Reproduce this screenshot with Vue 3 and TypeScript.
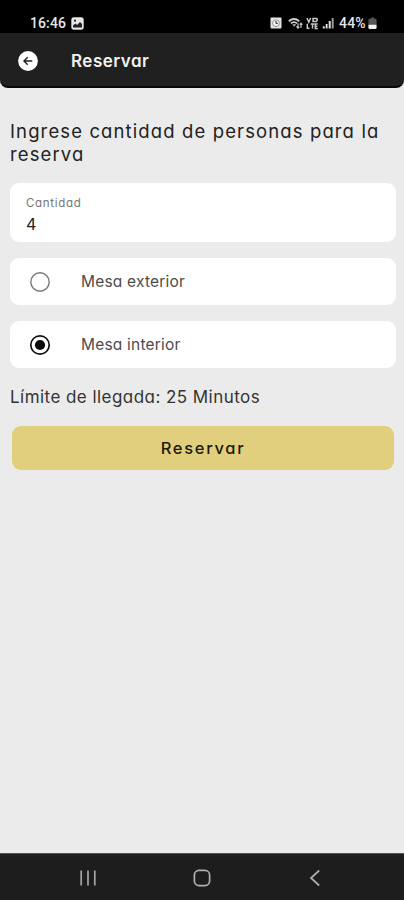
<script setup lang="ts">
import { ref } from 'vue'

interface TableOption {
  id: string
  label: string
}

const options: TableOption[] = [
  { id: 'exterior', label: 'Mesa exterior' },
  { id: 'interior', label: 'Mesa interior' },
]
const selected = ref('interior')
const quantity = ref('4')
</script>

<template>
  <div class="screen">
    <div class="status">
      <span class="clock">16:46</span>
      <svg class="photo" width="13" height="13" viewBox="0 0 13 13">
        <rect x="0.3" y="0.3" width="12.4" height="12.4" rx="2.6" fill="#e6e6e6" />
        <path d="M2 10.4V8.6L4.4 6.4l1.7 1.5L9 5l2 2v3.4z" fill="#222" />
        <circle cx="4" cy="3.7" r="1.1" fill="#222" />
      </svg>
      <div class="indicators">
        <svg width="12" height="12" viewBox="0 0 12 12">
          <rect x="0.5" y="0.5" width="11" height="11" rx="1" fill="#e4e4e4" />
          <circle cx="6" cy="6.2" r="3.4" fill="#f5f5f5" stroke="#888" stroke-width="0.9" />
          <path d="M6 4v2.4h1.8" fill="none" stroke="#222" stroke-width="1" />
        </svg>
        <svg class="wifi" width="15" height="12" viewBox="0 0 15 12">
          <path d="M0.8 4.2Q6 -0.2 11.2 4.2M2.8 6.4Q6 3.8 9.2 6.4" fill="none" stroke="#d0d0d0" stroke-width="1.8" />
          <path d="M4.2 7.2h4L6.2 9.8z" fill="#bbb" />
          <path d="M10 11V6.2M8.4 9.4l1.6 1.8 1.3-1.6M13 6.2v4.8M11.8 7.6L13 6.2l1.4 1.5" fill="none" stroke="#c4c4c4" stroke-width="1.2" />
        </svg>
        <svg class="lte" width="13" height="13" viewBox="0 0 13 13">
          <path d="M1 1l1.8 4.2L4.6 1M7 1.5h3.8q1.2 1.7-.6 3H7zM1.3 6.8v4.4h2.2M4.7 7h3.6M6.5 7v4.6M11.7 7H9.3v4.5h2.6M9.3 9.2h2" fill="none" stroke="#c8c8c8" stroke-width="1.5" />
        </svg>
        <svg class="signal" width="13" height="12" viewBox="0 0 13 12">
          <path d="M0.8 9.2h1.9v2.3H0.8zM3.7 7h1.9v4.5H3.7zM6.7 4h2v7.5h-2z" fill="#dedede" />
          <path d="M9.7 1h2v10.5h-2z" fill="#999" />
        </svg>
        <span class="percent">44%</span>
        <svg class="battery" width="9" height="13" viewBox="0 0 9 13">
          <path d="M2.8 .5h3.4v1.2h1q1.4 0 1.4 1.4V7H.4V3.1q0-1.4 1.4-1.4h1z" fill="#555" />
          <path d="M.4 7.5h8.2v3.3q0 1.3-1.4 1.3H1.8Q.4 12.1.4 10.8z" fill="#f4f4f4" />
        </svg>
      </div>
    </div>

    <header class="bar">
      <button class="back" aria-label="Volver">
        <svg width="20" height="20" viewBox="0 0 20 20">
          <circle cx="10" cy="10" r="9.9" fill="#fff" />
          <path d="M14.3 10H6.1M9.7 6.3L6 10l3.7 3.7" fill="none" stroke="#202020" stroke-width="1.4" />
        </svg>
      </button>
      <h1 class="title">Reservar</h1>
    </header>

    <main class="content">
      <p class="prompt">Ingrese cantidad de personas para la reserva</p>

      <label class="field">
        <span class="field-label">Cantidad</span>
        <input v-model="quantity" class="field-value" inputmode="numeric" />
      </label>

      <button v-for="o in options" :key="o.id" class="option" @click="selected = o.id">
        <svg class="radio" width="22" height="22" viewBox="0 0 22 22">
          <circle cx="11" cy="11" r="9.2" fill="none" :stroke="selected === o.id ? '#111' : '#777'" :stroke-width="selected === o.id ? 1.7 : 1.4" />
          <circle v-if="selected === o.id" cx="11" cy="11" r="5.1" fill="#080808" />
        </svg>
        <span class="option-label">{{ o.label }}</span>
      </button>

      <p class="limit">Límite de llegada: 25 Minutos</p>
      <button class="submit">Reservar</button>
    </main>

    <nav class="nav">
      <svg width="18" height="18" viewBox="0 0 18 18">
        <path d="M2.2 1.5v15M9 1.5v15M15.8 1.5v15" stroke="#a5a5a5" stroke-width="1.7" />
      </svg>
      <svg width="18" height="18" viewBox="0 0 18 18">
        <rect x="1.4" y="1.4" width="15.2" height="15.2" rx="4.6" fill="none" stroke="#b0b0b0" stroke-width="1.7" />
      </svg>
      <svg width="18" height="18" viewBox="0 0 18 18">
        <path d="M13.2 1.5L5 9l8.2 7.5" fill="none" stroke="#b0b0b0" stroke-width="1.7" />
      </svg>
    </nav>
  </div>
</template>

<style>
body {
  background: #ebebeb;
}
</style>

<style scoped>
.screen {
  box-sizing: border-box;
  width: 404px;
  height: 900px;
  display: flex;
  flex-direction: column;
  overflow: hidden;
  background: #ebebeb;
  font-family: Inter, "Liberation Sans", sans-serif;
  font-feature-settings: "cv11";
  color: #222;
}
.screen button {
  font: inherit;
  font-feature-settings: inherit;
  border: 0;
  padding: 0;
  cursor: pointer;
}
.status {
  flex: none;
  height: 33px;
  box-sizing: border-box;
  padding: 13px 27px 0 30px;
  display: flex;
  align-items: center;
  background: #000;
  color: #e6e6e6;
  font-family: Roboto, sans-serif;
  font-weight: 500;
  font-size: 14px;
  line-height: 20px;
}
.clock {
  width: 41px;
  letter-spacing: 0.1px;
}
.indicators {
  margin-left: auto;
  display: flex;
  align-items: center;
}
.wifi {
  margin-left: 6px;
}
.lte {
  margin-left: 3px;
}
.signal {
  margin-left: 3px;
}
.percent {
  margin-left: 4px;
  width: 29px;
  letter-spacing: 0.2px;
}
.bar {
  flex: none;
  height: 55px;
  box-sizing: border-box;
  padding: 2px 18px 0;
  display: flex;
  align-items: center;
  background: #202020;
  border-bottom: 2px solid #080808;
  border-radius: 0 0 8px 8px;
}
.back {
  width: 20px;
  height: 20px;
  background: none;
}
.back svg,
.nav svg {
  display: block;
}
.title {
  margin: 0 0 0 33px;
  font-size: 17px;
  line-height: 24px;
  font-weight: 600;
  letter-spacing: 0.5px;
  color: #f2f2f2;
}
.content {
  flex: 1;
  padding: 32px 8px 0 10px;
  display: flex;
  flex-direction: column;
}
.prompt {
  margin: 0;
  font-size: 18.5px;
  line-height: 23px;
  height: 63px;
  letter-spacing: 1.12px;
}
.field {
  height: 59px;
  box-sizing: border-box;
  padding: 13px 16px 0;
  display: flex;
  flex-direction: column;
  background: #fff;
  border-radius: 9px;
}
.field-label {
  font-size: 11.5px;
  line-height: 15px;
  letter-spacing: 0.7px;
  color: #777;
}
.field-value {
  border: 0;
  outline: 0;
  padding: 0;
  margin-top: 2px;
  height: 22px;
  font: inherit;
  font-size: 16px;
  color: #222;
  background: none;
}
.screen .option {
  height: 47px;
  margin-top: 16px;
  padding-left: 19px;
  display: flex;
  align-items: center;
  background: #fff;
  border-radius: 9px;
}
.option-label {
  margin-left: 30px;
  font-size: 15.5px;
  color: #4c4c4c;
  letter-spacing: 0.2px;
}
.limit {
  margin: 17px 0 0;
  font-size: 17px;
  line-height: 24px;
  letter-spacing: 0.45px;
  color: #333;
}
.screen .submit {
  height: 44px;
  margin: 17px 2px 0;
  background: #e2cf7d;
  border-radius: 9px;
  font-size: 16.5px;
  font-weight: 500;
  letter-spacing: 1.7px;
  color: #1c1a10;
}
.nav {
  flex: none;
  height: 47px;
  box-sizing: border-box;
  padding: 1px 80px 0 79px;
  display: flex;
  align-items: center;
  justify-content: space-between;
  background: #1d1d1d;
  border-top: 1px solid #555;
}
</style>
